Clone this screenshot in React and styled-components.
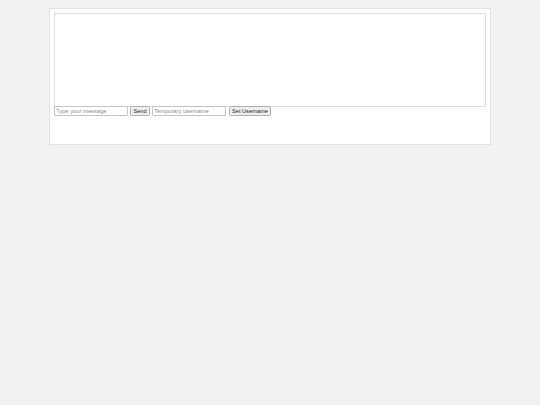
import React from "react";
import styled, { createGlobalStyle } from "styled-components";

const Global = createGlobalStyle`
  html, body { background: #f2f2f2; }
  body { margin: 8px; font-family: "Liberation Sans", Arial, sans-serif; }
`;

const Panel = styled.div`
  box-sizing: border-box;
  width: 442px;
  height: 137px;
  margin: 0 auto;
  background: #ffffff;
  border: 1px solid #e2e2e2;
  padding: 4px;
`;

const Messages = styled.div`
  box-sizing: border-box;
  height: 94px;
  border: 1px solid #dcdcdc;
  background: #fff;
`;

const Form = styled.div`
  display: flex;
  align-items: center;
  gap: 2px;
  height: 10px;
  margin-top: -1px;
`;

const Input = styled.input`
  box-sizing: border-box;
  width: ${(p) => p.$w}px;
  height: 10px;
  padding: 0 1px;
  border: 1px solid #c4c4c4;
  border-radius: 1px;
  font-family: "Liberation Sans", Arial, sans-serif;
  font-size: 5.8px;
  color: #333;
  outline: none;
  &::placeholder { color: #8a8a8a; }
`;

const Button = styled.button`
  box-sizing: border-box;
  display: block;
  width: ${(p) => p.$w}px;
  height: 10px;
  padding: 1px 0 0;
  margin-left: ${(p) => p.$ml || 0}px;
  border: 1px solid #b0b0b0;
  border-radius: 1.5px;
  background: #efefef;
  font-family: "Liberation Sans", Arial, sans-serif;
  font-size: 5.6px;
  color: #1a1a1a;
  line-height: 7px;
  text-align: center;
`;

export default function App() {
  return (
    <>
      <Global />
      <Panel>
        <Messages />
        <Form>
          <Input $w={74} placeholder="Type your message" />
          <Button $w={20}>Send</Button>
          <Input $w={74} placeholder="Temporary username" />
          <Button $w={42} $ml={1}>Set Username</Button>
        </Form>
      </Panel>
    </>
  );
}
